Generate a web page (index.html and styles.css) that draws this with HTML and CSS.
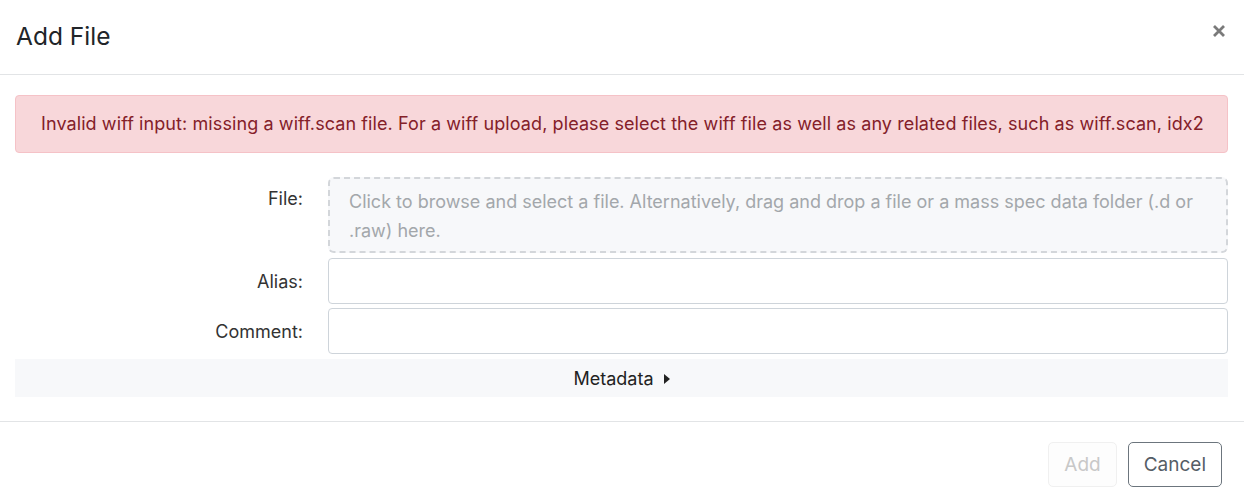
FILE: index.html
```html
<!DOCTYPE html>
<html lang="en">
<head>
<meta charset="utf-8">
<title>Add File</title>
<link rel="stylesheet" href="styles.css">
</head>
<body>
<div class="modal">
  <div class="modal-header">
    <h5 class="modal-title">Add File</h5>
    <button class="close" type="button" aria-label="Close">
      <svg width="14" height="14" viewBox="0 0 14 14"><path d="M2 2 L12 12 M12 2 L2 12" stroke="#7a7a7a" stroke-width="2.8" stroke-linecap="butt"/></svg>
    </button>
  </div>
  <div class="modal-body">
    <div class="alert">Invalid wiff input: missing a wiff.scan file. For a wiff upload, please select the wiff file as well as any related files, such as wiff.scan, idx2</div>
    <div class="form-row file-row">
      <label class="form-label">File:</label>
      <div class="dropzone">Click to browse and select a file. Alternatively, drag and drop a file or a mass spec data folder (.d or .raw) here.</div>
    </div>
    <div class="form-row">
      <label class="form-label">Alias:</label>
      <input class="form-input" type="text">
    </div>
    <div class="form-row last-row">
      <label class="form-label">Comment:</label>
      <input class="form-input" type="text">
    </div>
    <div class="metadata-toggle">Metadata <span class="caret"></span></div>
  </div>
  <div class="modal-footer">
    <button class="btn btn-add" type="button" disabled>Add</button>
    <button class="btn btn-cancel" type="button">Cancel</button>
  </div>
</div>
</body>
</html>
```

FILE: styles.css
```css
* { box-sizing: border-box; }

html, body {
  margin: 0;
  background: #fff;
}

body {
  font-family: "Inter", "Liberation Sans", sans-serif;
  color: #212529;
  font-size: 18px;
}

.modal {
  width: 1244px;
  background: #fff;
}

.modal-header {
  height: 75px;
  padding: 0 16px;
  display: flex;
  align-items: center;
  justify-content: space-between;
  border-bottom: 1px solid #e2e4e6;
}

.modal-title {
  margin: 0 0 3px 0;
  font-size: 24.5px;
  font-weight: 400;
  color: #212529;
}

.close {
  border: 0;
  background: transparent;
  padding: 0;
  margin: 0 2px 12px 0;
  display: flex;
}

.modal-body {
  padding: 20px 16px 24px 15px;
}

.alert {
  height: 58px;
  padding: 16px 25px;
  line-height: 24px;
  background: #f8d7da;
  border: 1px solid #f5c2c7;
  border-radius: 4px;
  color: #842029;
  font-size: 18px;
  letter-spacing: 0.09px;
  white-space: nowrap;
  margin-bottom: 24px;
}

.form-row {
  display: flex;
  align-items: center;
  margin-bottom: 4px;
}

.file-row {
  margin-bottom: 5px;
}

.last-row {
  margin-bottom: 5px;
}

.form-label {
  width: 313px;
  flex: none;
  text-align: right;
  padding-right: 25px;
  font-size: 18px;
  color: #333;
}

.file-row .form-label {
  align-self: flex-start;
  padding-top: 11px;
}

.dropzone {
  flex: 1;
  height: 76px;
  padding: 8px 19px;
  line-height: 29px;
  background: #f7f8fa;
  border: 2px dashed #d3d6da;
  border-radius: 6px;
  color: #a3a7ab;
  font-size: 18px;
}

.form-input {
  flex: 1;
  height: 46px;
  border: 1px solid #ced4da;
  border-radius: 4px;
  background: #fff;
  font: inherit;
}

.metadata-toggle {
  height: 38px;
  background: #f7f8fa;
  display: flex;
  align-items: center;
  justify-content: center;
  font-size: 18px;
  color: #222;
  gap: 10px;
}

.caret {
  width: 0;
  height: 0;
  border-top: 5px solid transparent;
  border-bottom: 5px solid transparent;
  border-left: 6px solid #222;
  margin-top: 2px;
}

.modal-footer {
  border-top: 1px solid #e2e4e6;
  padding: 20px 22px 16px;
  display: flex;
  justify-content: flex-end;
  gap: 11px;
}

.btn {
  height: 45px;
  padding: 0 15px;
  font-family: inherit;
  font-size: 19px;
  border-radius: 5px;
  background: #fff;
}

.btn-add {
  border: 1px solid #f0f0f0;
  background: #fdfdfd;
  color: #c8c8c8;
}

.btn-cancel {
  border: 1px solid #6c757d;
  color: #555d66;
}
```
